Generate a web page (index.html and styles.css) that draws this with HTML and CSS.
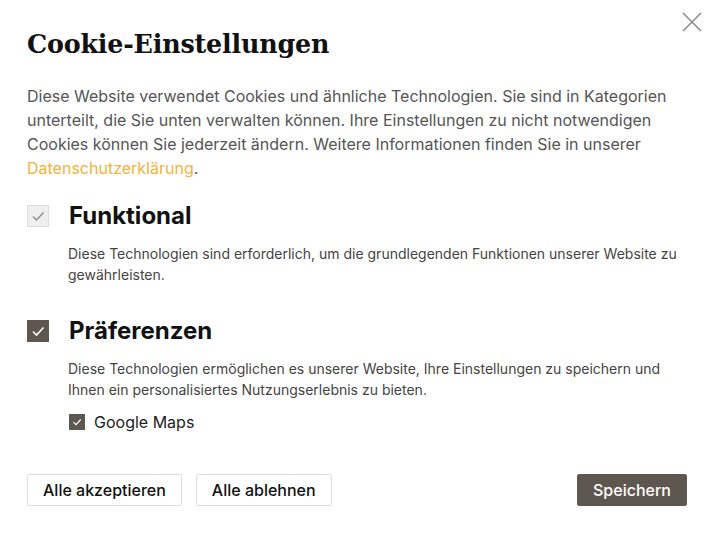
FILE: index.html
```html
<!DOCTYPE html>
<html lang="de">
<head>
<meta charset="utf-8">
<link rel="stylesheet" href="styles.css">
</head>
<body>
<div class="dialog">
  <button class="close" aria-label="Schließen">
    <svg width="20" height="20" viewBox="0 0 20 20"><path d="M1 1L19 19M19 1L1 19" stroke="#8a8a8a" stroke-width="1.5" fill="none"/></svg>
  </button>
  <h1 class="title">Cookie-Einstellungen</h1>
  <p class="intro">Diese Website verwendet Cookies und ähnliche Technologien. Sie sind in Kategorien unterteilt, die Sie unten verwalten können. Ihre Einstellungen zu nicht notwendigen Cookies können Sie jederzeit ändern. Weitere Informationen finden Sie in unserer <a class="link" href="#">Datenschutzerklärung</a>.</p>

  <div class="category">
    <div class="cat-head">
      <span class="box box-disabled">
        <svg width="14" height="14" viewBox="0 0 14 14"><path d="M2 7.5L5.5 11L12.5 3.5" stroke="#8d8d8d" stroke-width="1.4" fill="none"/></svg>
      </span>
      <h2 class="cat-title">Funktional</h2>
    </div>
    <p class="cat-desc">Diese Technologien sind erforderlich, um die grundlegenden Funktionen unserer Website zu gewährleisten.</p>
  </div>

  <div class="category">
    <div class="cat-head">
      <span class="box box-on">
        <svg width="14" height="14" viewBox="0 0 14 14"><path d="M2 7.5L5.5 11L12.5 3.5" stroke="#ffffff" stroke-width="1.6" fill="none"/></svg>
      </span>
      <h2 class="cat-title">Präferenzen</h2>
    </div>
    <p class="cat-desc">Diese Technologien ermöglichen es unserer Website, Ihre Einstellungen zu speichern und Ihnen ein personalisiertes Nutzungserlebnis zu bieten.</p>
    <label class="sub">
      <span class="box-small">
        <svg width="10" height="10" viewBox="0 0 10 10"><path d="M1.5 5.2L4 7.7L8.7 2.5" stroke="#ffffff" stroke-width="1.2" fill="none"/></svg>
      </span>
      <span class="sub-label">Google Maps</span>
    </label>
  </div>

  <div class="actions">
    <button class="btn btn-light">Alle akzeptieren</button>
    <button class="btn btn-light">Alle ablehnen</button>
    <span class="spacer"></span>
    <button class="btn btn-dark">Speichern</button>
  </div>
</div>
</body>
</html>
```
FILE: styles.css
```css
* { box-sizing: border-box; }
html, body { margin: 0; padding: 0; background: #fff; }
body { font-family: Inter, "Noto Sans", sans-serif; color: #222; }

.dialog {
  position: relative;
  width: 715px;
  height: 534px;
  padding: 26px 28px 0 27px;
}

.close {
  position: absolute;
  top: 12px;
  right: 13px;
  width: 20px;
  height: 20px;
  padding: 0;
  border: 0;
  background: none;
  line-height: 0;
}

.title {
  margin: 0;
  font-family: "DejaVu Serif", serif;
  font-weight: bold;
  font-size: 25.4px;
  line-height: 36px;
  color: #111;
  letter-spacing: -0.2px;
}

.intro {
  margin: 22px 0 0;
  font-size: 16px;
  line-height: 24px;
  color: #555;
}

.link { color: #f2b33d; text-decoration: none; }

.category { margin-top: 22px; }
.category + .category { margin-top: 32px; }

.cat-head {
  display: flex;
  align-items: center;
  gap: 20px;
  height: 28px;
}

.box {
  width: 22px;
  height: 22px;
  display: flex;
  align-items: center;
  justify-content: center;
  flex: none;
}
.box-disabled { background: #efefef; border: 1px solid #dcdcdc; }
.box-on { background: #5e5750; }

.cat-title {
  margin: 0;
  font-size: 24px;
  font-weight: 700;
  color: #111;
  line-height: 28px;
}

.cat-desc {
  margin: 13px 0 0 41px;
  font-size: 14px;
  line-height: 21px;
  color: #444;
}

.sub {
  display: flex;
  align-items: center;
  gap: 9px;
  margin: 10px 0 0 42px;
  height: 24px;
}
.box-small {
  width: 16px;
  height: 16px;
  background: #5e5750;
  display: flex;
  align-items: center;
  justify-content: center;
}
.sub-label { font-size: 16px; color: #222; }

.actions {
  display: flex;
  align-items: center;
  gap: 14px;
  margin-top: 40px;
}
.spacer { flex: 1; }

.btn {
  height: 32px;
  padding: 0 15px;
  font-family: Inter, "Noto Sans", sans-serif;
  font-size: 16px;
  font-weight: 500;
  border-radius: 2px;
  cursor: pointer;
}
.btn-light { background: #fff; border: 1px solid #dedede; color: #111; }
.btn-dark { background: #5e5750; border: 1px solid #5e5750; color: #fff; width: 110px; }
```
